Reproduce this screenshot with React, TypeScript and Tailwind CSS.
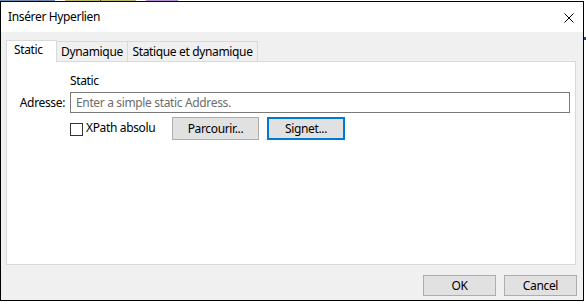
import React from "react";

export default function App() {
  const font = { fontFamily: '"Noto Sans", "Open Sans", sans-serif' };
  return (
    <div className="w-[586px] h-[302px] bg-white relative overflow-hidden text-[12px] tracking-[-0.35px] text-black" style={font}>
      {/* background strip behind window */}
      <div className="flex h-px w-full">
        <div className="w-[55px] bg-[#6b8bb0]" />
        <div className="w-[10px] bg-white" />
        <div className="w-[35px] bg-[#bdb76b]" />
        <div className="w-px bg-[#5a4a2a]" />
        <div className="w-[35px] bg-[#bdb76b]" />
        <div className="w-[10px] bg-white" />
        <div className="w-[32px] bg-[#b68fd6]" />
        <div className="flex-1 bg-white" />
      </div>
      <div className="absolute right-0 top-[37px] w-[2px] h-[3px] bg-[#1f4e79]" />
      {/* window */}
      <div className="w-[584px] h-[300px] border border-black flex flex-col">
        {/* title bar */}
        <div className="h-[30px] bg-white flex items-center justify-between pl-[7px] pr-[9px] shrink-0">
          <span className="leading-4">Insérer Hyperlien</span>
          <svg width="10" height="10" viewBox="0 0 10 10" className="mt-[1px]">
            <path d="M0.5 0.5 L9.5 9.5 M9.5 0.5 L0.5 9.5" stroke="#000" strokeWidth="1" fill="none" />
          </svg>
        </div>
        {/* body */}
        <div className="flex-1 bg-[#f0f0f0] flex flex-col pt-[8px] pl-[5px] pr-[6px]">
          {/* tabs */}
          <div className="flex items-end h-[21px] relative z-10">
            <div className="h-[22px] w-[51px] bg-white border border-b-0 border-[#d9d9d9] flex items-start pt-[1px] pl-[7px] -mb-px">
              <span className="leading-4">Static</span>
            </div>
            <div className="h-[20px] w-[71px] bg-[#f0f0f0] border border-l-0 border-b-0 border-[#d9d9d9] flex items-center justify-center">
              <span className="leading-4">Dynamique</span>
            </div>
            <div className="h-[20px] w-[130px] bg-[#f0f0f0] border border-l-0 border-b-0 border-[#d9d9d9] flex items-center justify-center">
              <span className="leading-4">Statique et dynamique</span>
            </div>
          </div>
          {/* panel */}
          <div className="w-[570px] h-[204px] bg-white border border-[#d9d9d9] flex flex-col pt-[11px]">
            <div className="pl-[63px] leading-4 h-4">Static</div>
            <div className="flex items-center mt-[3px]">
              <div className="w-[59px] text-right pr-[1px] leading-4">Adresse:</div>
              <div className="ml-[4px] w-[500px] h-[21px] border border-[#7a7a7a] bg-white flex items-center pl-[5px]">
                <span className="text-[#6d6d6d] leading-4">Enter a simple static Address.</span>
              </div>
            </div>
            <div className="flex items-center mt-[4px] pl-[63px]">
              <div className="w-[102px] flex items-center">
                <div className="w-[13px] h-[13px] border border-[#333333] bg-white mt-[2px] shrink-0" />
                <span className="ml-[3px] leading-4 mt-[-1px] whitespace-nowrap">XPath absolu</span>
              </div>
              <div className="w-[87px] h-[23px] bg-[#e1e1e1] border border-[#adadad] flex items-center justify-center">
                <span className="leading-4">Parcourir...</span>
              </div>
              <div className="ml-[8px] w-[78px] h-[23px] bg-[#e1e1e1] border-2 border-[#0078d7] flex items-center justify-center">
                <span className="leading-4">Signet...</span>
              </div>
            </div>
          </div>
          {/* bottom buttons */}
          <div className="flex justify-end gap-[8px] mt-[10px]">
            <div className="w-[73px] h-[21px] bg-[#e1e1e1] border border-[#adadad] flex items-center justify-center">
              <span className="leading-4">OK</span>
            </div>
            <div className="w-[73px] h-[21px] bg-[#e1e1e1] border border-[#adadad] flex items-center justify-center">
              <span className="leading-4">Cancel</span>
            </div>
          </div>
        </div>
      </div>
    </div>
  );
}
